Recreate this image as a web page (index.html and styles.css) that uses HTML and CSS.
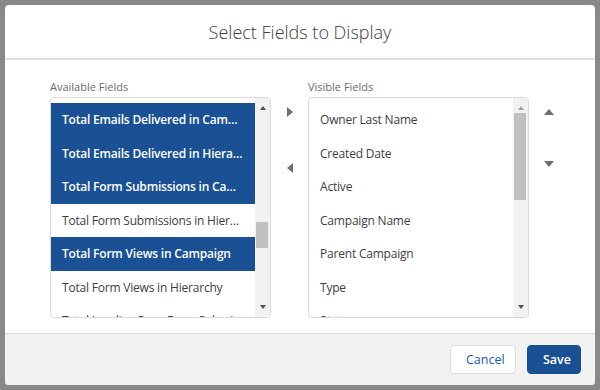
FILE: index.html
```html
<!DOCTYPE html>
<html lang="en">
<head>
  <meta charset="UTF-8" />
  <title>Select Fields to Display</title>
  <link rel="stylesheet" href="styles.css">
</head>
<body>
  <div class="modal">
    <div class="modal-header">
      <h2>Select Fields to Display</h2>
    </div>

    <div class="modal-body">
      <div class="column">
        <div class="list-label">Available Fields</div>
        <div class="listbox">
          <ul class="options">
            <li class="selected">Total Emails Delivered in Campaign</li>
            <li class="selected">Total Emails Delivered in Hierarchy</li>
            <li class="selected">Total Form Submissions in Campaign</li>
            <li>Total Form Submissions in Hierarchy</li>
            <li class="selected">Total Form Views in Campaign</li>
            <li>Total Form Views in Hierarchy</li>
            <li>Total Landing Page Form Submissions</li>
          </ul>
          <div class="scrollbar">
            <span class="scroll-arrow up"></span>
            <div class="track"><div class="thumb thumb-left"></div></div>
            <span class="scroll-arrow down"></span>
          </div>
        </div>
      </div>

      <div class="mover">
        <span class="tri tri-right"></span>
        <span class="tri tri-left"></span>
      </div>

      <div class="column">
        <div class="list-label">Visible Fields</div>
        <div class="listbox">
          <ul class="options">
            <li>Owner Last Name</li>
            <li>Created Date</li>
            <li>Active</li>
            <li>Campaign Name</li>
            <li>Parent Campaign</li>
            <li>Type</li>
            <li>Status</li>
          </ul>
          <div class="scrollbar">
            <span class="scroll-arrow up disabled"></span>
            <div class="track"><div class="thumb thumb-right"></div></div>
            <span class="scroll-arrow down"></span>
          </div>
        </div>
      </div>

      <div class="mover mover-order">
        <span class="tri tri-up"></span>
        <span class="tri tri-down"></span>
      </div>
    </div>

    <div class="modal-footer">
      <button class="btn btn-neutral">Cancel</button>
      <button class="btn btn-brand">Save</button>
    </div>
  </div>
</body>
</html>
```

FILE: styles.css
```css
* {
  margin: 0;
  padding: 0;
  box-sizing: border-box;
  font-family: 'Open Sans', 'Liberation Sans', sans-serif;
}

body {
  background-color: #898989;
  height: 390px;
  overflow: hidden;
  padding: 5px;
}

.modal {
  background-color: #fff;
  border-radius: 4px;
  height: 380px;
  display: flex;
  flex-direction: column;
  overflow: hidden;
}

.modal-header {
  height: 55px;
  border-bottom: 2px solid #e0e0e0;
  display: flex;
  justify-content: center;
  align-items: center;
}

.modal-header h2 {
  font-size: 18px;
  font-weight: 300;
  color: #3e3e3c;
}

.modal-body {
  flex: 1;
  display: flex;
  padding: 20px 0 0 45px;
}

.column {
  width: 221px;
}

.list-label {
  font-size: 11px;
  color: #6b6b6b;
  height: 14px;
  line-height: 14px;
  margin-bottom: 3px;
}

.listbox {
  height: 221px;
  border: 1px solid #dddbda;
  border-radius: 4px;
  display: flex;
  overflow: hidden;
}

.options {
  list-style: none;
  flex: 1;
  min-width: 0;
  padding-top: 5px;
}

.options li {
  height: 33.5px;
  line-height: 34.5px;
  padding: 0 11px;
  font-size: 12px;
  letter-spacing: -0.2px;
  color: #3e3e3c;
  white-space: nowrap;
  overflow: hidden;
  text-overflow: ellipsis;
}

.options li.selected {
  background-color: #1a5194;
  color: #fff;
  font-weight: 600;
}

.scrollbar {
  width: 15px;
  background-color: #f1f1f1;
  display: flex;
  flex-direction: column;
  align-items: center;
  padding: 5px 0;
}

.track {
  flex: 1;
  width: 100%;
  position: relative;
}

.thumb {
  position: absolute;
  left: 1px;
  right: 2px;
  background-color: #c1c1c1;
}

.thumb-left {
  top: 109px;
  height: 26px;
}

.thumb-right {
  top: 0;
  height: 87px;
}

.scroll-arrow {
  width: 0;
  height: 0;
  border-left: 3.5px solid transparent;
  border-right: 3.5px solid transparent;
  margin: 3px 0;
}

.scroll-arrow.up {
  border-bottom: 4px solid #505050;
}

.scroll-arrow.up.disabled {
  border-bottom-color: #a3a3a3;
}

.scroll-arrow.down {
  border-top: 4px solid #505050;
}

.mover {
  width: 37px;
  display: flex;
  flex-direction: column;
  align-items: center;
  gap: 46px;
  padding-top: 27px;
}

.mover-order {
  width: 39px;
}

.tri {
  width: 0;
  height: 0;
}

.tri-right {
  border-top: 5px solid transparent;
  border-bottom: 5px solid transparent;
  border-left: 6px solid #706e6b;
}

.tri-left {
  border-top: 5px solid transparent;
  border-bottom: 5px solid transparent;
  border-right: 6px solid #706e6b;
}

.tri-up {
  border-left: 5px solid transparent;
  border-right: 5px solid transparent;
  border-bottom: 6px solid #706e6b;
  margin-top: 2px;
}

.tri-down {
  border-left: 5px solid transparent;
  border-right: 5px solid transparent;
  border-top: 6px solid #706e6b;
}

.modal-footer {
  height: 52px;
  background-color: #f3f2f2;
  border-top: 1px solid #dddbda;
  display: flex;
  justify-content: flex-end;
  align-items: center;
  gap: 11px;
  padding-right: 14px;
}

.btn {
  height: 29px;
  border-radius: 4px;
  font-size: 12.5px;
  padding: 0 15px;
  cursor: pointer;
}

.btn-neutral {
  width: 66px;
  background-color: #fff;
  border: 1px solid #dddbda;
  color: #1a5ca8;
}

.btn-brand {
  width: 54px;
  background-color: #1a5194;
  border: 1px solid #1a5194;
  color: #fff;
  font-weight: 600;
}
```
